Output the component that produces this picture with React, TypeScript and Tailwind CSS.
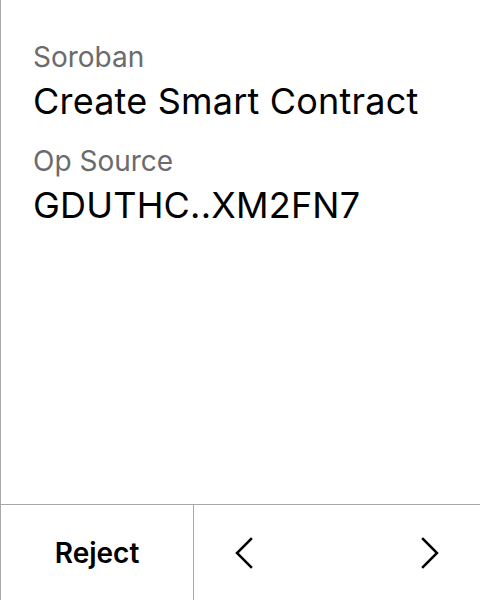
const Field: React.FC<{ label: string; value: string }> = ({ label, value }) => (
  <div className="flex flex-col gap-[4px]">
    <span className="text-[28px] leading-[36px] text-[#6b6b6b]">{label}</span>
    <span className="text-[36px] leading-[44px] tracking-[0.2px] text-black">{value}</span>
  </div>
);

const Chevron: React.FC<{ dir: "left" | "right" }> = ({ dir }) => (
  <svg width="20" height="32" viewBox="0 0 20 32" fill="none" stroke="black" strokeWidth="2.5" strokeLinecap="square">
    {dir === "left" ? <path d="M17 2 L3 16 L17 30" /> : <path d="M3 2 L17 16 L3 30" />}
  </svg>
);

export default function App() {
  return (
    <div className="flex flex-col w-[480px] h-[600px] bg-white border-l border-[#a8a8a8] font-['Inter',sans-serif]">
      <div className="flex flex-col flex-1 gap-[20px] pl-[32px] pt-[39px]">
        <Field label="Soroban" value="Create Smart Contract" />
        <Field label="Op Source" value="GDUTHC..XM2FN7" />
      </div>
      <div className="flex h-[96px] border-t border-[#a8a8a8]">
        <button className="flex items-center justify-center w-[192px] text-[28px] font-semibold text-black">
          Reject
        </button>
        <div className="flex flex-1 items-center justify-between pl-[40px] pr-[40px] border-l border-[#a8a8a8]">
          <Chevron dir="left" />
          <Chevron dir="right" />
        </div>
      </div>
    </div>
  );
}
